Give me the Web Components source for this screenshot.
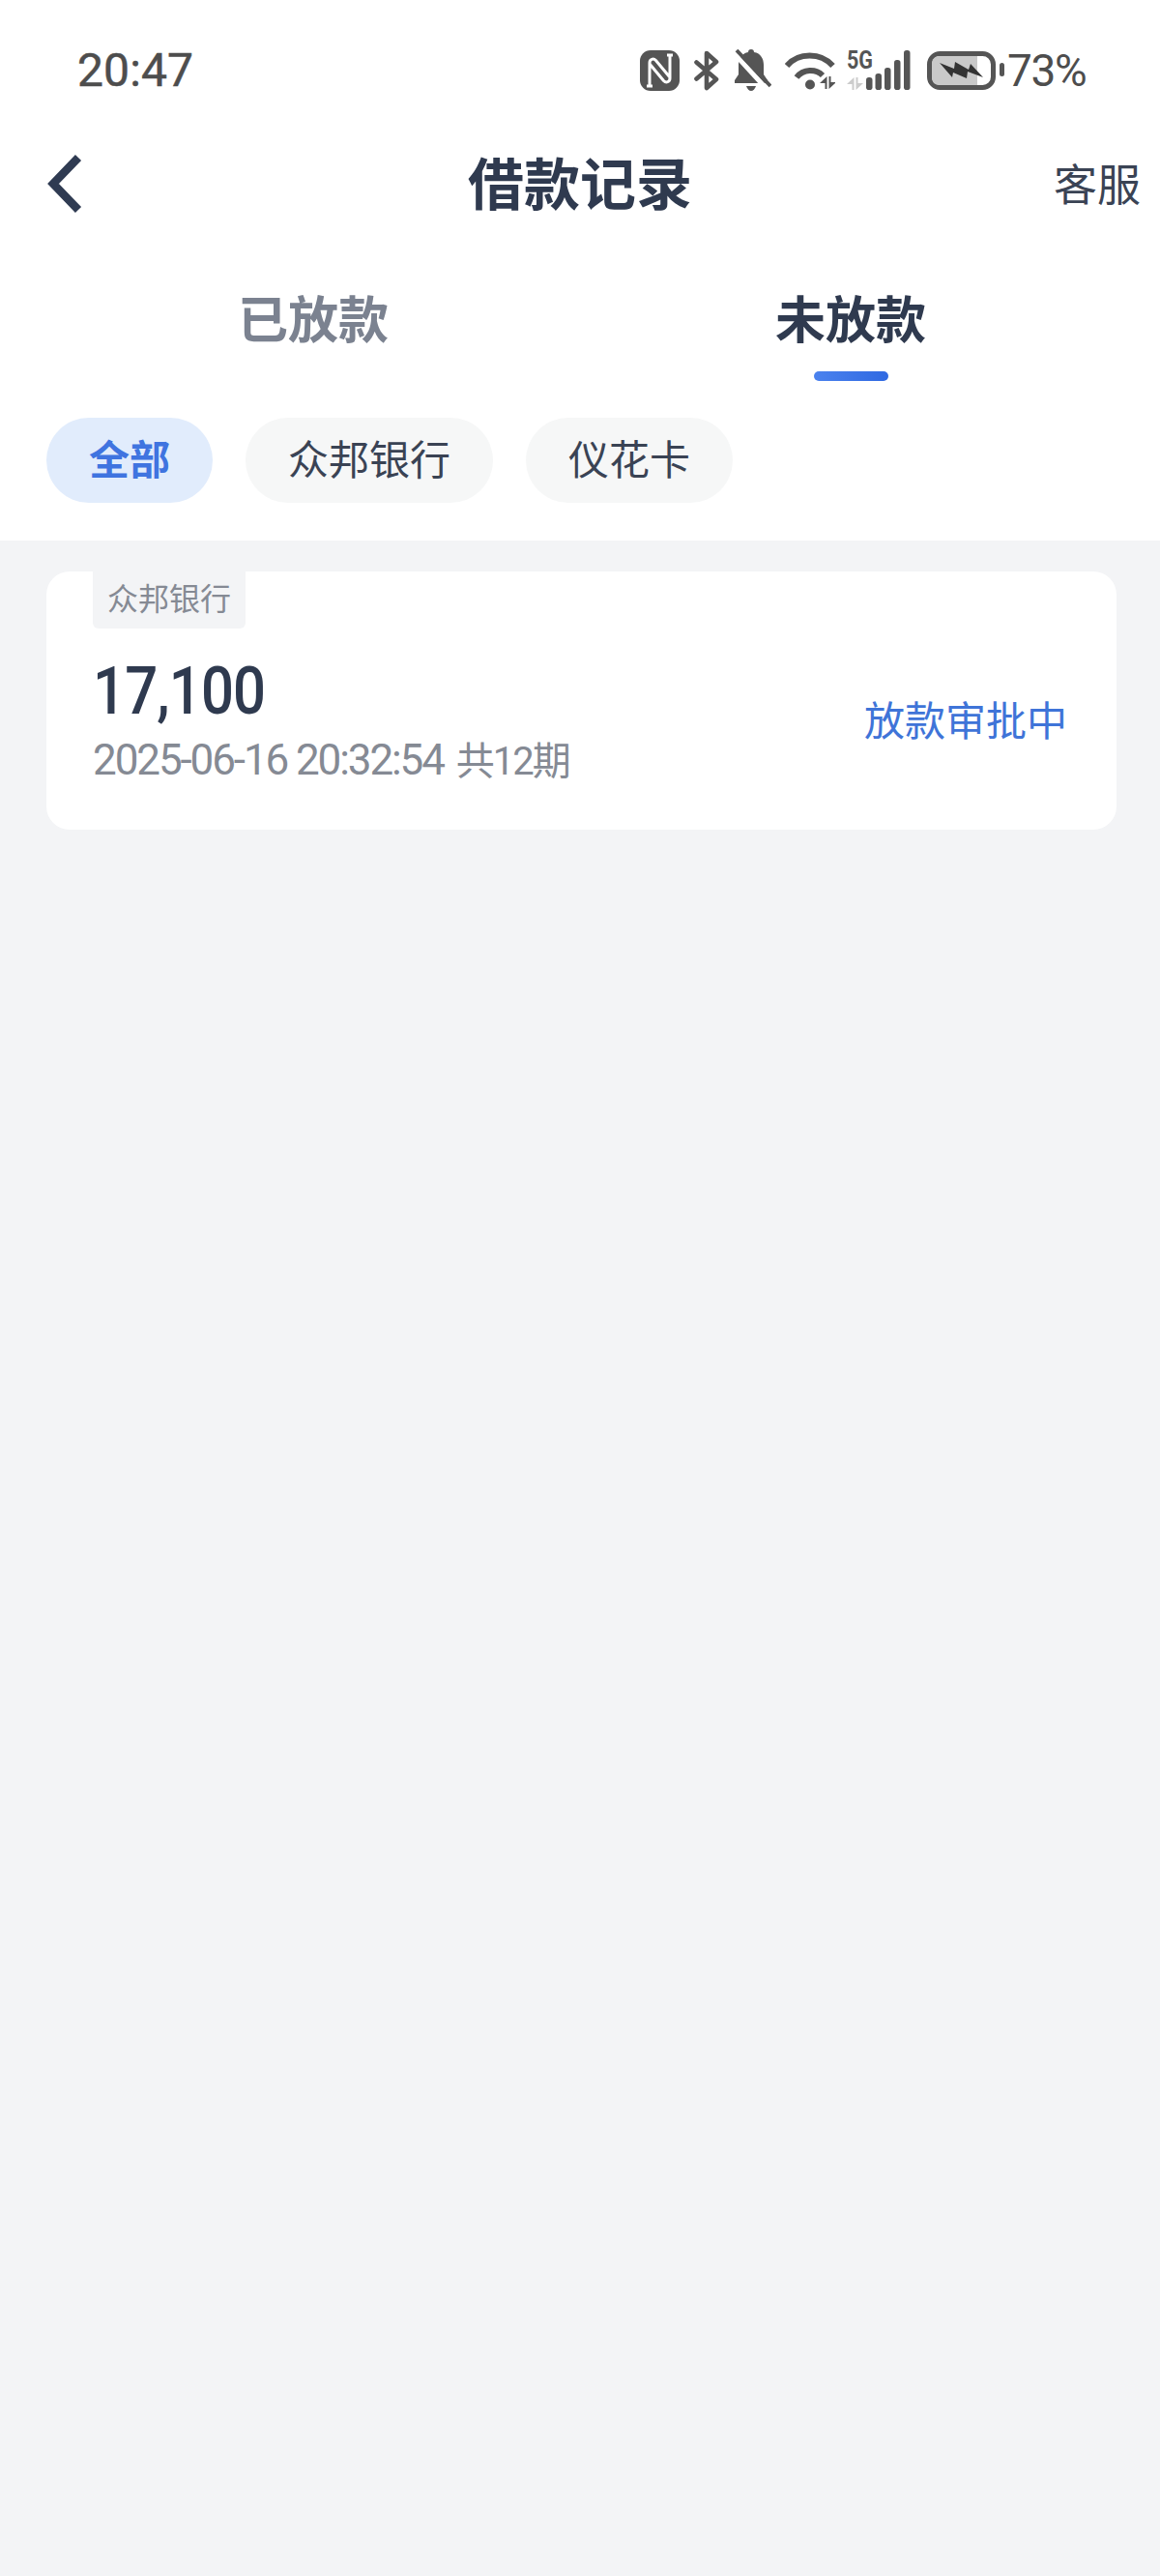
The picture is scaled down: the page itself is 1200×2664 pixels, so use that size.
<!DOCTYPE html>
<html lang="zh"><head><meta charset="utf-8"><title>借款记录</title>
<style>
html,body{margin:0;padding:0;background:#f3f4f6}
body{width:1200px;min-height:2664px;font-family:"Noto Sans CJK SC","Noto Sans",sans-serif;color:#2f3a4f}
loan-page{min-height:2664px}
</style></head><body>
<loan-page>
  <status-bar time="20:47" battery="73%"></status-bar>
  <nav-bar title="借款记录" action="客服"></nav-bar>
  <loan-tabs>
    <tab-item>已放款</tab-item>
    <tab-item active>未放款</tab-item>
  </loan-tabs>
  <chip-row>
    <filter-chip active>全部</filter-chip>
    <filter-chip>众邦银行</filter-chip>
    <filter-chip>仪花卡</filter-chip>
  </chip-row>
  <loan-card tag="众邦银行" amount="17,100" date="2025-06-16 20:32:54" term="共12期" status="放款审批中"></loan-card>
</loan-page>
<script>
const CJK='"Noto Sans CJK SC","Noto Sans",sans-serif';
const NUM='Roboto,"Noto Sans CJK SC",sans-serif';
function def(name,html){
  customElements.define(name,class extends HTMLElement{
    constructor(){super();this.attachShadow({mode:'open'});}
    connectedCallback(){
      this.shadowRoot.innerHTML=typeof html==='function'?html(this):html;
    }
  });
}
const arrows=c=>`<path d="M7.500 0v13H5.500V7H0Z M9.500 13V0h2v6H17Z" fill="${c}"/>`;
def('loan-page',`<style>:host{display:block;width:1200px;background:#f3f4f6}</style><slot></slot>`);
def('status-bar',el=>`<style>
:host{display:flex;align-items:center;height:145px;background:#fff;padding:0 75px 0 80px;box-sizing:border-box;justify-content:space-between;color:#4d4d4d}
.t{font:400 48px/1 ${NUM};letter-spacing:.1px;-webkit-text-stroke:.5px #4d4d4d}
.r{display:flex;align-items:center;height:48px}
svg{display:block;flex:none}
.b{font:400 46px/1 ${NUM};letter-spacing:-1.400px;margin-left:3px;width:83px;white-space:nowrap}
</style>
<span class="t">${el.getAttribute('time')}</span>
<div class="r">
<svg width="41" height="42" viewBox="0 0 41 42" style="margin-right:15px"><rect width="41" height="42" rx="11" fill="#555"/><path d="M10 37V13c0-4 4-5 6.500-2.500L31 28M31 5v24c0 4-4 5-6.500 2.500L10 14" fill="none" stroke="#fff" stroke-width="3"/><path d="M7 37h6M28 5h6" stroke="#fff" stroke-width="3" fill="none"/></svg>
<svg width="26" height="42" viewBox="0 0 26 42" style="margin-right:16px"><path d="M2.500 12.500 23 30 13 39V3l10 9L2.500 29.500" fill="none" stroke="#555" stroke-width="4.600" stroke-linejoin="round" stroke-linecap="round"/></svg>
<svg width="38" height="43" viewBox="0 0 38 43" style="margin-right:14px"><path d="M17 0c2 0 3 1 3 3 7 1 10 7 10 13v10l4 6v3H0v-3l4-6V16C4 10 8 4 14 3c0-2 1-3 3-3Z" fill="#555"/><path d="M12 38h10c-1 3-3 5-5 5s-4-2-5-5Z" fill="#555"/><path d="M0 5 34 42" stroke="#fff" stroke-width="5"/><path d="M2 1 37 38" stroke="#555" stroke-width="3.800"/></svg>
<svg width="52" height="40" viewBox="0 0 52 40" style="margin-right:12px"><path d="M2 15C14 1 37 1 49.500 15" fill="none" stroke="#555" stroke-width="6"/><path d="M12 27C19 18 32 18 39 25" fill="none" stroke="#555" stroke-width="6"/><circle cx="26" cy="34.500" r="5" fill="#555"/><g transform="translate(36 26)">${arrows('#555')}</g></svg>
<svg width="66" height="48" viewBox="0 -6 66 48" style="margin:-6px 17px 0 0"><text x="0" y="19" font-family="Roboto,sans-serif" font-weight="700" font-size="26" textLength="27" lengthAdjust="spacingAndGlyphs" fill="#555">5G</text><g transform="translate(0 28)">${arrows('#ccc')}</g><g fill="#555"><rect x="20" y="28" width="6.500" height="13" rx="2.800"/><rect x="29.500" y="24" width="6.500" height="17" rx="2.800"/><rect x="39" y="18" width="6.500" height="23" rx="2.800"/><rect x="49" y="10" width="6.500" height="31" rx="2.800"/><rect x="59" y="0" width="6.500" height="41" rx="2.800"/></g></svg>
<svg width="80" height="40" viewBox="0 0 80 40"><rect x="2.500" y="2.500" width="66" height="35" rx="11" fill="#fff" stroke="#555" stroke-width="5"/><path d="M13 5H52V35H13C8 35 5 32 5 27V13C5 8 8 5 13 5Z" fill="#c9c9c9"/><path d="M13 12 28 18 29 11 43 19 45 13 58 27 42 21 41 28 27 22 26 27Z" fill="#333"/><rect x="75" y="12" width="5" height="14" rx="2.500" fill="#555"/></svg>
<span class="b">${el.getAttribute('battery')}</span>
</div>`);
def('nav-bar',el=>`<style>
:host{display:grid;grid-template-columns:1fr auto 1fr;align-items:center;height:90px;background:#fff;padding:0 20px 0 49px;box-sizing:border-box;color:#2f3a4f}
svg{display:block}
h1{margin:0 29px 6px 0;font:700 58px/1 ${CJK}}
.a{justify-self:end;font:400 45px/1 ${CJK};color:#3a4354;margin-bottom:4px}
</style>
<svg width="37" height="62" viewBox="0 0 37 62"><path d="M32 4 6 31l26 27" fill="none" stroke="#2f3b52" stroke-width="8.500"/></svg>
<h1>${el.getAttribute('title')}</h1>
<span class="a">${el.getAttribute('action')}</span>`);
def('loan-tabs',`<style>:host{display:grid;grid-template-columns:554px 558px;background:#fff;padding:59px 0 0 47px;box-sizing:border-box;height:197px}</style><slot></slot>`);
def('tab-item',el=>{const a=el.hasAttribute('active');return `<style>
:host{display:flex;flex-direction:column;align-items:center;font:700 52px/68px ${CJK};color:${a?'#2f3a4f':'#7b8290'}}
i{display:block;width:77px;height:10px;border-radius:5px;margin-top:22px;background:${a?'linear-gradient(90deg,#4b82ee,#2f69e2)':'transparent'}}
</style><slot></slot><i></i>`});
def('chip-row',`<style>:host{display:flex;gap:34px;background:#fff;padding:0 48px 39px;box-sizing:border-box}</style><slot></slot>`);
def('filter-chip',el=>{const a=el.hasAttribute('active');return `<style>
:host{display:flex;align-items:center;height:88px;padding:0 44px 7px;box-sizing:border-box;border-radius:44px;font:${a?700:400} 42px/1 ${CJK};background:${a?'#e1ecfc':'#f6f7f7'};color:${a?'#3f74e0':'#3a4354'}}
</style><slot></slot>`});
def('loan-card',el=>{const t=el.getAttribute('term');return `<style>
:host{display:flex;justify-content:space-between;align-items:flex-start;width:1107px;height:267px;margin:32px 0 0 48px;padding:0 51px 0 48px;box-sizing:border-box;background:#fff;border-radius:24px}
.tag{display:block;width:fit-content;height:59px;padding:0 15px;box-sizing:border-box;background:#f3f4f6;border-radius:0 0 6px 6px;font:400 32px/52px ${CJK};color:#858a94}
.amt{font:500 68px/1 ${NUM};color:#2f3a4f;letter-spacing:-1px;margin-top:31px;transform:scaleX(.88);transform-origin:0 50%}
.sub{font:400 44px/1 ${NUM};color:#858a94;margin-top:15px;letter-spacing:-2.100px;white-space:nowrap}
.sub span{font-size:40px;letter-spacing:-2px;margin-left:4px}
.st{font:400 42px/1 ${CJK};color:#3f74d8;margin-top:131px}
</style>
<div><span class="tag">${el.getAttribute('tag')}</span><div class="amt">${el.getAttribute('amount')}</div><div class="sub">${el.getAttribute('date')} <span>${t}</span></div></div>
<span class="st">${el.getAttribute('status')}</span>`});
</script>
</body></html>
